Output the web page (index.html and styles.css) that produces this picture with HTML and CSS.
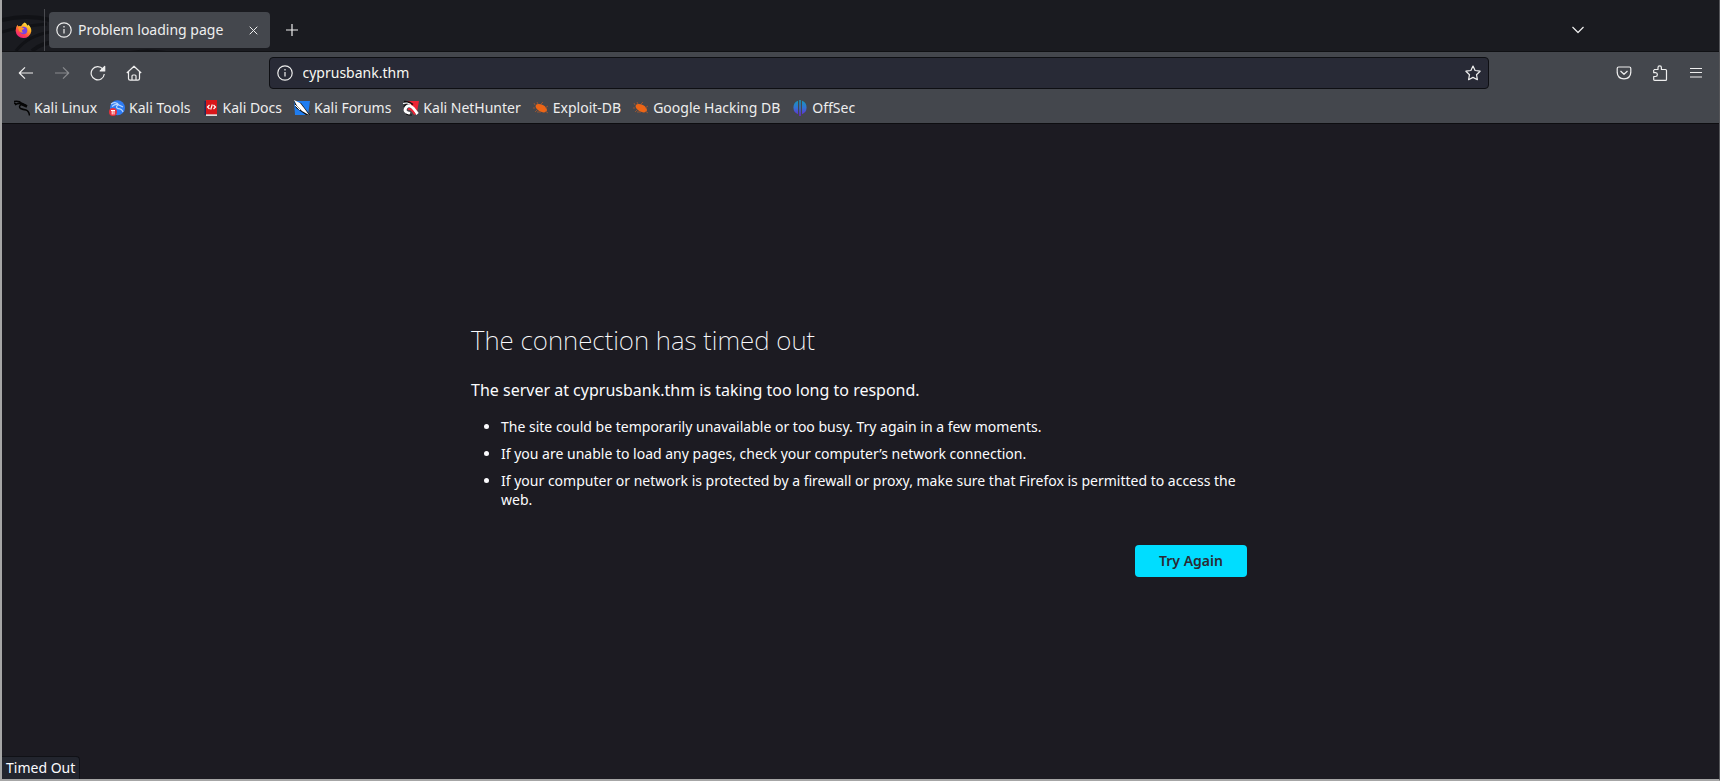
FILE: index.html
```html
<!DOCTYPE html>
<html lang="en">
<head>
<meta charset="utf-8">
<title>Problem loading page</title>
<link rel="stylesheet" href="styles.css">
</head>
<body>
<div class="window">
  <header class="chrome">
    <div class="tabstrip">
      <svg class="swirl" viewBox="0 0 170 51" aria-hidden="true"><g fill="none" stroke="#111216"><path stroke-width="4" d="M0 20Q25 14 48 20"/><path stroke-width="3" d="M0 32Q20 26 45 24M14 51Q25 36 48 32"/><path stroke-width="4" d="M30 51Q40 42 55 42M128 53Q145 50 164 53"/></g></svg>
      <button class="home-tab" aria-label="Firefox View">
        <svg width="17" height="17" viewBox="0 0 17 17"><defs><linearGradient id="fx" x1=".8" y1="0" x2=".2" y2="1"><stop offset="0" stop-color="#fff24a"/><stop offset=".4" stop-color="#ffa020"/><stop offset=".7" stop-color="#ff4150"/><stop offset="1" stop-color="#e8168c"/></linearGradient></defs><path fill="url(#fx)" d="M9.500 0.500C11 1 12 2.500 12.300 3.500Q13.100 3.300 13.100 2.500C15.500 4.600 16.500 6.800 16.300 9.200A7.900 7.900 0 0 1 .6 8.800Q.5 5 2.600 2.800L3.200 4.600Q4.600 3.800 6 4.300Q7.500 1.800 9.500.5z"/><circle cx="8.600" cy="8.500" r="3.700" fill="#7643e5"/><path fill="#ff9829" d="M3 4.500Q6 4 7.500 5.800L9.300 6.300Q8.800 7.700 6.900 7.900Q6.400 9.600 8.400 10.300Q5.700 11.300 4.200 9Q3.300 7 3 4.500z"/></svg>
      </button>
      <div class="tab">
        <svg class="icon" viewBox="0 0 16 16"><circle cx="8" cy="8" r="7.200"/><path d="M8 7v4.500M8 4v1.500"/></svg>
        <span class="tab-title">Problem loading page</span>
        <button class="tab-close" aria-label="Close tab"><svg width="9" height="9" viewBox="0 0 9 9"><path d="M.7.7l7.600 7.600M8.300.7L.7 8.300"/></svg></button>
      </div>
      <button class="new-tab" aria-label="New tab"><svg width="12" height="12" viewBox="0 0 12 12"><path d="M6 0v12M0 6h12"/></svg></button>
      <button class="all-tabs" aria-label="List all tabs"><svg width="12" height="8" viewBox="0 0 12 8"><path d="M.5 1L6 6.500L11.500 1"/></svg></button>
    </div>
    <div class="toolbar">
      <div class="tools">
        <button class="tool" aria-label="Back"><svg class="icon" viewBox="0 0 16 16"><path d="M15 8H1.500M7 2.300L1.300 8L7 13.700"/></svg></button>
        <button class="tool" aria-label="Forward" disabled><svg class="icon" viewBox="0 0 16 16"><path d="M1 8h13.500M9 2.300L14.700 8L9 13.700"/></svg></button>
        <button class="tool" aria-label="Reload"><svg class="icon" viewBox="0 0 16 16"><path d="M12.800 4A6.600 6.600 0 1 0 14.300 9"/><path class="solid" d="M14.700 1.500v4.500h-4.500z"/></svg></button>
        <button class="tool" aria-label="Home"><svg class="icon" viewBox="0 0 16 16"><path d="M.8 8L8 1.200L15.200 8M2.500 6.700v6.800q0 1.700 1.700 1.700h7.600q1.700 0 1.700-1.700V6.700M6 15v-4q0-1 1-1h2q1 0 1 1v4"/></svg></button>
      </div>
      <div class="urlbar">
        <svg class="icon" viewBox="0 0 16 16"><circle cx="8" cy="8" r="7.200"/><path d="M8 7v4.500M8 4v1.500"/></svg>
        <input class="url" type="text" aria-label="Address" value="cyprusbank.thm">
        <button class="star" aria-label="Bookmark this page"><svg class="icon" viewBox="0 0 16 16"><path d="M8 1.100L10.100 5.500L15.100 6.200L11.500 9.700L12.400 14.700L8 12.400L3.600 14.700L4.500 9.700L.9 6.200L5.900 5.500z"/></svg></button>
      </div>
      <div class="tools">
        <button class="tool" aria-label="Save to Pocket"><svg class="icon" viewBox="0 0 16 16"><path d="M2.600 2h10.800q1.400 0 1.400 1.400v4Q14.500 13.500 8 13.900Q1.500 13.500 1.200 7.400v-4Q1.200 2 2.600 2zM4.500 6L8 9.300L11.500 6"/></svg></button>
        <button class="tool" aria-label="Extensions"><svg class="icon" viewBox="0 0 16 16"><path d="M2 4.500h4V2.600a1.700 1.700 0 0 1 3.400 0v1.900h4.100q1 0 1 1v8.900q0 1-1 1H2.700q-1 0-1-1V11.500h1.800a1.900 1.900 0 0 0 0-3.800H1.700V4.800"/></svg></button>
        <button class="tool" aria-label="Menu"><svg class="icon" viewBox="0 0 16 16"><path d="M2 3.500h12M2 7.500h12M2 12h12"/></svg></button>
      </div>
    </div>
    <nav class="bookmarks" aria-label="Bookmarks">
      <a class="bookmark" href="#"><svg class="favicon" viewBox="0 0 16 16"><g fill="none" stroke="#050505" stroke-width="1.500"><path d="M0 1.500Q5 .5 8 3.500L12 5.500M1 5Q5 2 9 4.500M2 4L0 3M8 4Q4 6 6.500 8.500Q9 9.500 12 10Q15 11 15.500 15.500"/><path stroke-width="2.500" d="M7.500 4L13 6.500"/></g></svg>Kali Linux</a>
      <a class="bookmark" href="#"><svg class="favicon" viewBox="0 0 16 16"><circle cx="8.500" cy="7.800" r="7.500" fill="#2e7bf3"/><path fill="none" stroke="#b7d6ff" stroke-width="1.200" d="M2 4Q7 1 10 5L14 7M3 6.500Q7 3 10 5M9 5Q6 7 9 8.700Q13 9 14 12"/><circle cx="4" cy="12" r="4" fill="#e8303b"/><path fill="none" stroke="#fff" d="M2 10.500h4M3.200 10.500v4M5 10.500v4"/></svg>Kali Tools</a>
      <a class="bookmark" href="#"><svg class="favicon" viewBox="0 0 16 16"><path fill="#252957" d="M1.500 1h3v14h-3z"/><path fill="#d9161a" d="M3 0h11v14H3z"/><path fill="#ddd" d="M3 13.500h11V16H3z"/><path fill="#d9161a" d="M3 13h11v1.300H3z"/><path fill="none" stroke="#fff" stroke-width="1.200" d="M6.500 5L4.500 7l2 2M10.500 5l2 2l-2 2M9.300 4.500L7.700 9.500"/></svg>Kali Docs</a>
      <a class="bookmark" href="#"><svg class="favicon" viewBox="0 0 16 16"><path fill="#1f7df0" d="M0 1h16l-2 14H1z"/><path fill="#111" d="M0 1l7 2l9 12h-4L2 8z"/><path fill="#fff" d="M0 0l6 3l4 5l5 7l-7-4l-5-5z"/><path fill="none" stroke="#fff" d="M1 5l5 5"/></svg>Kali Forums</a>
      <a class="bookmark" href="#"><svg class="favicon" viewBox="0 0 16 16"><path fill="#ed2434" d="M4 1h12l-2 11l-4-4z"/><path fill="none" stroke="#111" stroke-width="1.500" d="M1 1.500Q6 1 10 4.500M1 7Q2 4 6 3.500"/><path fill="none" stroke="#fff" stroke-width="3" d="M14.500 14L10 8Q6 4 3 7.500Q0 12 7 13.500"/><path fill="none" stroke="#fff" d="M0 3.500q4-1.500 8 1"/><path fill="none" stroke="#ed2434" stroke-width="2" d="M5 9.500q3-2 7 5"/><path fill="none" stroke="#111" d="M3 14q2 1.500 6 1"/></svg>Kali NetHunter</a>
      <a class="bookmark" href="#"><svg class="favicon" viewBox="0 0 16 16"><ellipse cx="8.300" cy="8" rx="6.200" ry="3.500" transform="rotate(28 8 8)" fill="#ec6516"/><path fill="none" stroke="#a8582f" stroke-width=".8" d="M2 5L1 3M5 4L4 2M8 4l2-2M2 8L0 8M4 10l-2 2M8 12H4M12 8l3-2M12 11l3 2"/></svg>Exploit-DB</a>
      <a class="bookmark" href="#"><svg class="favicon" viewBox="0 0 16 16"><ellipse cx="8.300" cy="8" rx="6.200" ry="3.500" transform="rotate(28 8 8)" fill="#ec6516"/><path fill="none" stroke="#a8582f" stroke-width=".8" d="M2 5L1 3M5 4L4 2M8 4l2-2M2 8L0 8M4 10l-2 2M8 12H4M12 8l3-2M12 11l3 2"/></svg>Google Hacking DB</a>
      <a class="bookmark" href="#"><svg class="favicon" viewBox="0 0 16 16"><defs><linearGradient id="os" gradientUnits="userSpaceOnUse" x1="0" y1="0" x2="0" y2="16"><stop offset="0" stop-color="#1599b8"/><stop offset=".5" stop-color="#3471d3"/><stop offset="1" stop-color="#6b24cf"/></linearGradient></defs><path fill="url(#os)" d="M6 .8v13.400A7.200 7.200 0 0 1 6 .8zM10 .8v13.400A7.200 7.200 0 0 0 10 .8zM7.200 0h1.600v16H7.200z"/></svg>OffSec</a>
    </nav>
  </header>
  <main class="page">
    <section class="error">
      <h1 class="error-title">The connection has timed out</h1>
      <p class="error-lead">The server at cyprusbank.thm is taking too long to respond.</p>
      <ul class="error-list">
        <li>The site could be temporarily unavailable or too busy. Try again in a few moments.</li>
        <li>If you are unable to load any pages, check your computer’s network connection.</li>
        <li>If your computer or network is protected by a firewall or proxy, make sure that Firefox is permitted to access the web.</li>
      </ul>
      <button class="retry">Try Again</button>
    </section>
    <div class="status" role="status">Timed Out</div>
  </main>
</div>
</body>
</html>
```
FILE: styles.css
```css
* { box-sizing: border-box; }
body {
  margin: 0;
  font: 14px/20px "Noto Sans", "Open Sans", sans-serif;
  color: #fbfbfe;
  background: #1c1b22;
}
button {
  font: inherit;
  color: inherit;
  background: none;
  border: 0;
  padding: 0;
  display: flex;
  align-items: center;
  justify-content: center;
}
svg { display: block; flex: none; }
.window {
  display: flex;
  flex-direction: column;
  min-height: 100vh;
  border: solid #a6a6a6;
  border-width: 0 1px 2px 2px;
  border-right-color: #55565a;
}
.icon { width: 16px; height: 16px; }
.icon, .tab-close svg, .new-tab svg, .all-tabs svg {
  fill: none;
  stroke: #eeeeee;
  stroke-width: 1.2;
  stroke-linejoin: round;
}
.tab-close svg { stroke-width: 1; }
.icon .solid { fill: #eeeeee; }
.chrome { color: #eeeeee; background: #44474d; border-bottom: 1px solid #0d0d10; }
.tabstrip {
  position: relative;
  display: flex;
  align-items: stretch;
  height: 52px;
  padding-top: 9px;
  background: #1a1b20;
  border-bottom: 1px solid #101114;
}
.swirl { position: absolute; left: 0; top: 0; width: 170px; height: 51px; }
.home-tab { position: relative; width: 43px; border-right: 1px solid #4a4b50; }
.tab {
  position: relative;
  display: flex;
  align-items: center;
  gap: 6px;
  width: 221px;
  margin: 3px 4px;
  padding: 0 12px 0 7px;
  border-radius: 4px;
  background: #44474d;
}
.tab-title { flex: 1; white-space: nowrap; }
.new-tab { width: 32px; margin-left: 2px; }
.all-tabs { width: 32px; margin: 0 125px 0 auto; }
.toolbar { display: flex; align-items: center; height: 41px; padding: 0 5px 0 6px; justify-content: space-between; }
.tools { display: flex; }
.tool { width: 36px; height: 36px; }
.tool:disabled { opacity: 0.4; }
.urlbar {
  display: flex;
  align-items: center;
  flex: 0 1 1220px;
  height: 32px;
  margin-right: 1px;
  padding: 0 7px;
  gap: 10px;
  background: #282a36;
  border: 1px solid #0e0f13;
  border-radius: 4px;
}
.url {
  flex: 1;
  min-width: 0;
  padding: 0;
  border: 0;
  outline: 0;
  background: none;
  color: #f8f8f2;
  font: inherit;
}
.bookmarks { display: flex; align-items: center; gap: 12px; height: 30px; padding: 0 12px; }
.bookmark { display: flex; align-items: center; gap: 4px; color: inherit; text-decoration: none; white-space: nowrap; }
.favicon { width: 16px; height: 16px; }
.page {
  position: relative;
  flex: 1;
  display: flex;
  align-items: center;
  justify-content: center;
  padding: 0 3px 4px 0;
  background: #1c1b22;
}
.error { width: 100%; max-width: 776px; }
.error-title { margin: 0 0 20px; font-size: 26px; line-height: 34px; font-weight: 200; }
.error-lead { margin: 0; font-size: 16px; line-height: 26px; }
.error-list { margin: 14px 0 0; padding-left: 30px; font-size: 14px; line-height: 19px; }
.error-list li { margin-bottom: 8px; }
.retry {
  width: 112px;
  height: 32px;
  margin: 36px 0 0 auto;
  border-radius: 4px;
  background: #00ddff;
  color: #2b2a33;
  font-weight: 600;
}
.status {
  position: absolute;
  left: 0;
  bottom: 0;
  padding: 1px 4px;
  background: #22252e;
  border: solid #101116;
  border-width: 1px 1px 0 0;
  border-radius: 0 4px 0 0;
}
```
